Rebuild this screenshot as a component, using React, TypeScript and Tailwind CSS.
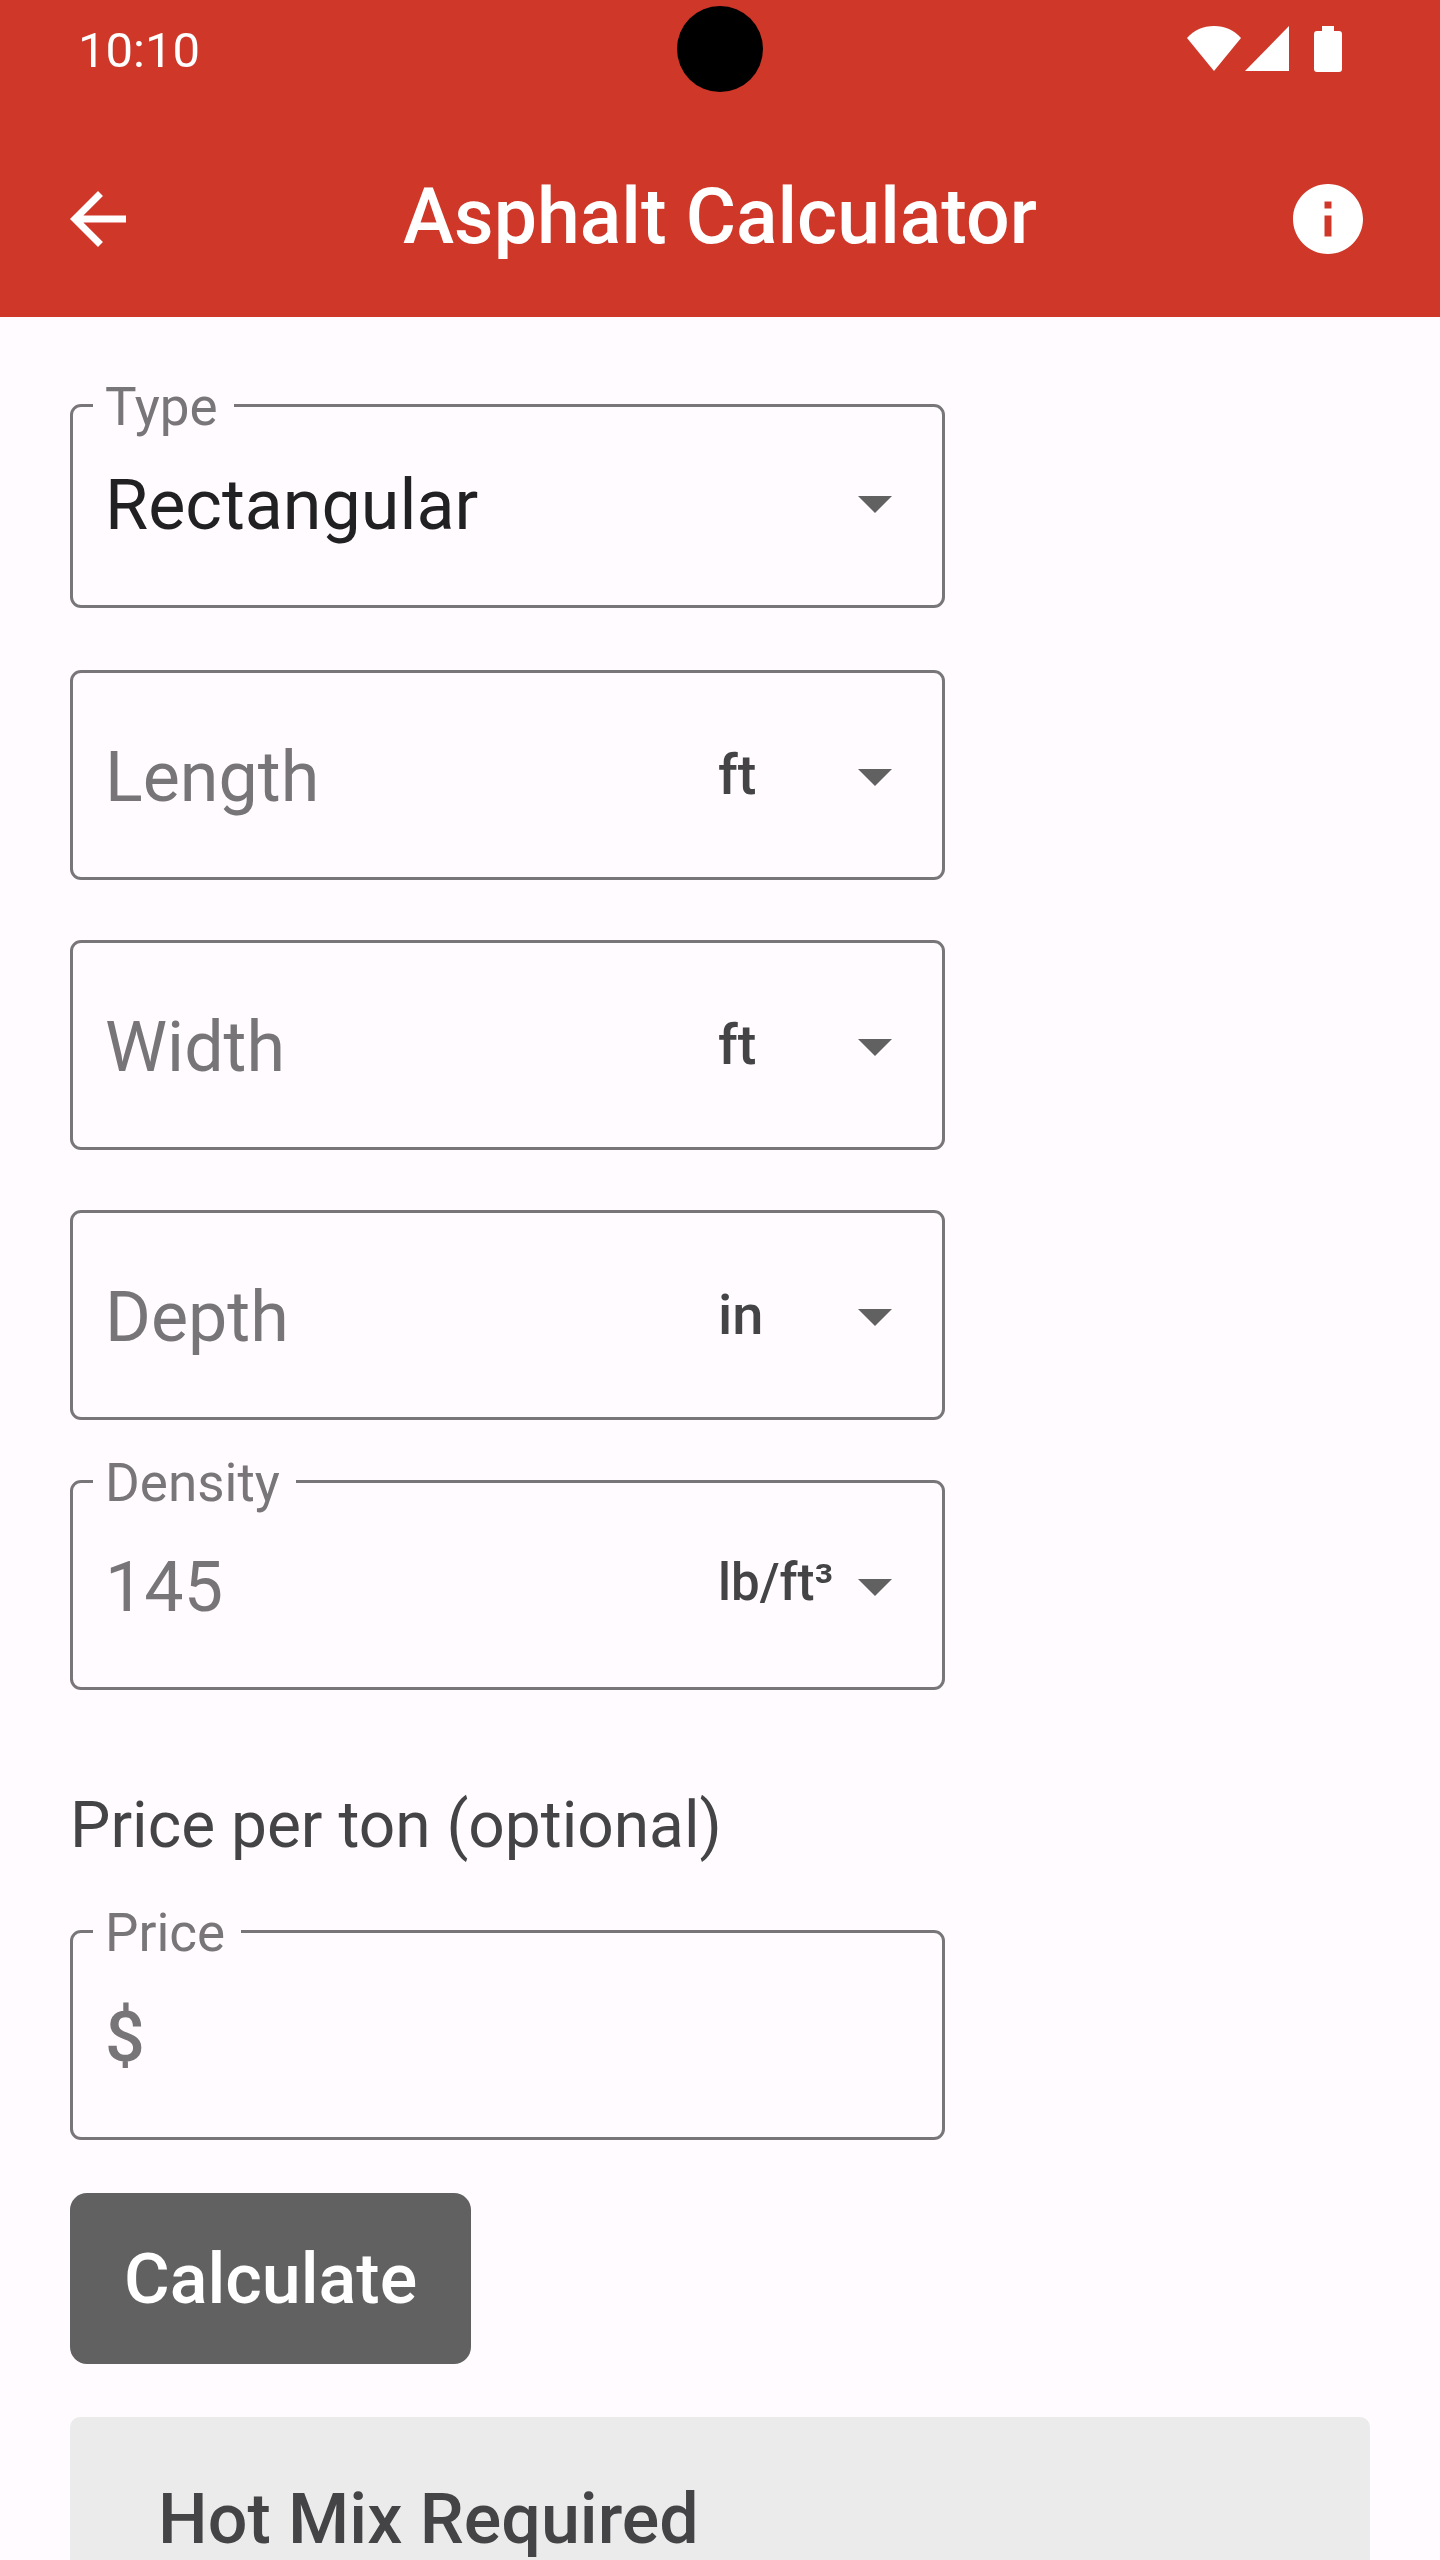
import type { ReactNode } from "react";

type Option = { label: string; value: string };

const LENGTH_UNITS: Option[] = [
  { label: "ft", value: "ft" },
  { label: "in", value: "in" },
  { label: "yd", value: "yd" },
  { label: "m", value: "m" },
];

const DENSITY_UNITS: Option[] = [
  { label: "lb/ft³", value: "lbft3" },
  { label: "kg/m³", value: "kgm3" },
];

const SHAPES: Option[] = [
  { label: "Rectangular", value: "rectangular" },
  { label: "Circular", value: "circular" },
];

const dimensions = [
  { id: "length", label: "Length", unit: "ft" },
  { id: "width", label: "Width", unit: "ft" },
  { id: "depth", label: "Depth", unit: "in" },
];

const StatusIcons = () => (
  <div className="mr-[98px] flex items-center justify-self-end text-white">
    <svg className="h-[46px] w-[54px]" viewBox="0 0 54 46" fill="currentColor">
      <path d="M0 12C7 4 16 0 27 0s20 4 27 12L27 45z" />
    </svg>
    <svg className="ml-1 h-[46px] w-11" viewBox="0 0 44 46" fill="currentColor">
      <path d="M44 0v45H0z" />
    </svg>
    <svg className="ml-[25px] h-[46px] w-7" viewBox="0 0 28 46" fill="currentColor">
      <path d="M8 0h12v5h5a3 3 0 0 1 3 3v35a3 3 0 0 1-3 3H3a3 3 0 0 1-3-3V8a3 3 0 0 1 3-3h5z" />
    </svg>
  </div>
);

const Header = () => (
  <header className="bg-[#cf3729] text-white">
    <div className="grid h-[98px] grid-cols-[1fr_auto_1fr] items-center">
      <span className="ml-[78px] pt-1 text-[49px] leading-[60px]">10:10</span>
      <span className="size-[86px] rounded-full bg-black" />
      <StatusIcons />
    </div>

    <div className="grid h-[219px] grid-cols-[1fr_auto_1fr] items-center pt-[22px]">
      <button type="button" aria-label="Back" className="ml-14">
        <svg className="size-[84px]" viewBox="0 0 24 24" fill="currentColor">
          <path d="M20 11H7.83l5.59-5.59L12 4l-8 8 8 8 1.41-1.41L7.83 13H20v-2z" />
        </svg>
      </button>
      <h1 className="pb-1 text-[77px] leading-[90px] font-medium">Asphalt Calculator</h1>
      <button type="button" aria-label="Info" className="mr-[70px] justify-self-end">
        <svg className="size-[84px]" viewBox="0 0 24 24" fill="currentColor">
          <path d="M12 2C6.48 2 2 6.48 2 12s4.48 10 10 10 10-4.48 10-10S17.52 2 12 2zm1 15h-2v-6h2v6zm0-8h-2V7h2v2z" />
        </svg>
      </button>
    </div>
  </header>
);

const Caret = ({ className }: { className: string }) => (
  <svg
    className={`pointer-events-none absolute right-[50px] h-[17px] w-[34px] ${className}`}
    viewBox="0 0 34 17"
    fill="#616161"
  >
    <path d="M0 0h34L17 17z" />
  </svg>
);

const Field = ({ children }: { children: ReactNode }) => (
  <div className="relative flex h-[210px] w-full max-w-[875px] rounded-[11px] border-3 border-[#79767a]">
    {children}
  </div>
);

// Sits on the outline, its background cuts the gap in the border
const FloatingLabel = ({ htmlFor, text }: { htmlFor: string; text: string }) => (
  <label
    htmlFor={htmlFor}
    className="absolute -top-[30px] left-5 bg-[#fffbff] pr-4 pl-3 text-[53px] leading-[60px] text-[#79767a]"
  >
    {text}
  </label>
);

const UnitSelect = ({ name, unit, options, className }: { name: string; unit: string; options: Option[]; className: string }) => (
  <div className="relative w-56 shrink-0">
    <select
      aria-label={`${name} unit`}
      defaultValue={unit}
      className={`size-full appearance-none font-medium text-[#444446] outline-none ${className}`}
    >
      {options.map(({ label, value }) => (
        <option key={value} value={value}>
          {label}
        </option>
      ))}
    </select>
    <Caret className="top-24" />
  </div>
);

const inputClass =
  "min-w-0 flex-1 pt-1 pl-8 text-[70px] text-[#777577] outline-none placeholder:text-[#777577] placeholder:opacity-100";

export default function App() {
  return (
    <div className="flex min-h-screen flex-col bg-[#fffbff] font-[Roboto,sans-serif]">
      <Header />

      <main className="flex flex-1 flex-col px-[70px] pt-[87px]">
        <form className="flex flex-col items-start">
          <div className="flex w-full flex-col gap-[60px]">
            <div className="relative mb-0.5 flex h-[204px] w-full max-w-[875px] rounded-[11px] border-3 border-[#79767a]">
              <FloatingLabel htmlFor="type" text="Type" />
              <select
                id="type"
                defaultValue="rectangular"
                className="size-full appearance-none pb-0.5 pl-8 text-[70px] text-[#212023] outline-none"
              >
                {SHAPES.map(({ label, value }) => (
                  <option key={value} value={value}>
                    {label}
                  </option>
                ))}
              </select>
              <Caret className="top-[89px]" />
            </div>

            {dimensions.map(({ id, label, unit }) => (
              <Field key={id}>
                <input id={id} aria-label={label} placeholder={label} inputMode="decimal" className={inputClass} />
                <UnitSelect name={label} unit={unit} options={LENGTH_UNITS} className="text-[56px]" />
              </Field>
            ))}

            <Field>
              <FloatingLabel htmlFor="density" text="Density" />
              <input id="density" defaultValue="145" inputMode="decimal" className={inputClass} />
              <UnitSelect name="Density" unit="lbft3" options={DENSITY_UNITS} className="pb-1 text-[51px]" />
            </Field>
          </div>

          <p className="mt-24 mb-16 text-[64px] leading-[80px] text-[#444446]">Price per ton (optional)</p>

          <Field>
            <FloatingLabel htmlFor="price" text="Price" />
            <input
              id="price"
              placeholder="$"
              inputMode="decimal"
              className={`${inputClass} font-medium`}
            />
          </Field>

          <button
            type="button"
            className="mt-[53px] h-[171px] rounded-[17px] bg-[#616161] px-[54px] text-[70px] leading-[80px] font-medium text-white"
          >
            Calculate
          </button>
        </form>

        <section className="mt-[53px] flex-1 rounded-t-[10px] bg-[#ebebeb] px-[88px] pt-[62px]">
          <h2 className="text-[70px] leading-[80px] font-medium text-[#444446]">Hot Mix Required</h2>
        </section>
      </main>
    </div>
  );
}
